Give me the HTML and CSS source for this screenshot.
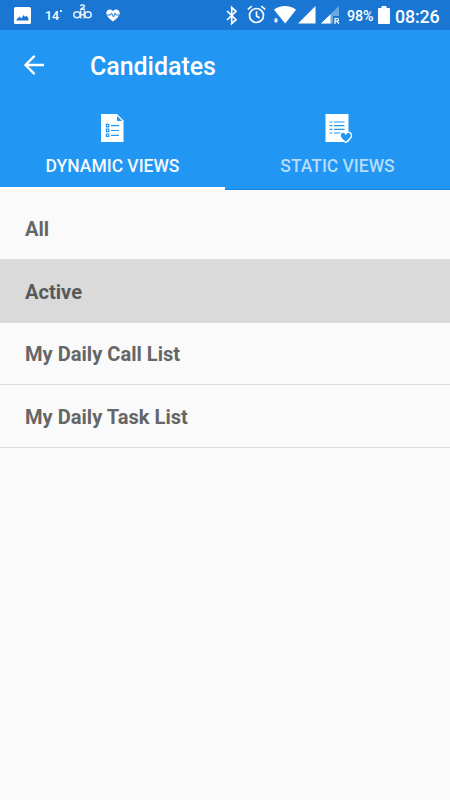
FILE: index.html
```html
<!DOCTYPE html>
<html lang="en">
<head>
<meta charset="utf-8">
<title>Candidates</title>
<link rel="stylesheet" href="styles.css">
</head>
<body>
<div class="status">
  <div class="status-left">
    <svg class="picture" width="17" height="17" viewBox="0 0 17 17"><path fill="#fff" fill-rule="evenodd" d="M1.500 0h14Q17 0 17 1.500v14Q17 17 15.500 17h-14Q0 17 0 15.500v-14Q0 0 1.500 0zM2.500 13.500h12v-2l-2-3-1.500 1.500-1.500-2-2 3.500-2-2-3 3z"/></svg>
    <span class="temp">14<i class="degree"></i></span>
    <svg class="dab" width="20" height="17" viewBox="0 0 20 17" fill="none" stroke="#e3effb" stroke-width="1.500"><ellipse cx="4" cy="10.800" rx="3.200" ry="3"/><ellipse cx="15" cy="10.800" rx="3.200" ry="3"/><path d="M7.700 6.500v8M11.300 6.500v8M7.700 10.800h3.600M7.300 2c.8-1.500 4.300-1.500 4.300.3 0 1.200-3 1.300-3.800 3h4.400"/></svg>
    <svg class="heart" width="14" height="13" viewBox="0 0 14 13"><path fill="#fff" d="M7 12.500C3.500 9.600.3 7.300.3 4 .3.400 4.800-.8 7 2.100 9.200-.8 13.700.4 13.700 4c0 3.300-3.200 5.600-6.700 8.500z"/><path fill="none" stroke="#1976d2" stroke-width="1" d="M1 6h3.300l1.200-2 2 4 1.700-4 1 2H13"/></svg>
  </div>
  <div class="status-right">
    <svg class="bt" width="12" height="19" viewBox="0 0 12 19" fill="none" stroke="#fff" stroke-width="1.700"><path d="M1 5l9 8.700-4.300 3.800v-16L10 5.300 1 14"/></svg>
    <svg class="alarm" width="19" height="19" viewBox="0 0 19 19" fill="none" stroke="#fff"><circle cx="9.500" cy="10.500" r="7" stroke-width="1.700"/><path stroke-width="1.600" d="M9.500 6.300v4.700l3.200 2M.8 4.400l4-3.300M18.200 4.400l-4-3.300"/></svg>
    <svg class="wifi" width="22" height="18" viewBox="0 0 22 18"><path fill="#fff" d="M0 3.700C6-1.200 16-1.200 22 3.700L11.200 17.500z"/><path fill="#d5e7fa" d="M2 11.500l1.600 1.800v2L2 17.300.4 15.300v-2z"/></svg>
    <svg class="signal" width="18" height="18" viewBox="0 0 18 18"><path fill="#fff" d="M17.500 0v17.500H0z"/></svg>
    <svg class="signal-two" width="19" height="18" viewBox="0 0 19 18"><path fill="#6aa8e4" d="M18 0v10h-6v7.500H0z"/><path fill="#fff" d="M9.500 8.300v9.200H0z"/><path fill="none" stroke="#fff" stroke-width="1.200" d="M14 18v-5.500h2.200q1.300 0 1.300 1.300t-1.300 1.400H14M16 15.200l1.900 2.800"/></svg>
    <span class="percent">98%</span>
    <svg class="battery" width="12" height="18" viewBox="0 0 12 18"><path fill="#fff" d="M3.500 0h5v2H11q1 0 1 1v14q0 1-1 1H1q-1 0-1-1V3q0-1 1-1h2.500z"/></svg>
    <span class="clock">08:26</span>
  </div>
</div>
<header class="appbar">
  <svg class="back" width="20" height="20" viewBox="0 0 20 20" fill="none" stroke="#fff" stroke-width="2.300"><path d="M20 10H1.800M10.600.9L1.500 10l9.100 9.100"/></svg>
  <h1 class="title">Candidates</h1>
</header>
<nav class="tabs">
  <div class="tab active">
    <svg class="tab-icon" width="28" height="30" viewBox="0 0 28 30"><path fill="#fff" d="M3 0h16l6.500 6.500V28H3z"/><path fill="#2196f3" d="M19 1.800l5.200 5.200H19z"/><path fill="none" stroke="#2196f3" stroke-width="1.200" d="M8.400 10.400h2.400v2.400H8.400zM8.400 15.200h2.400v2.400H8.400zM8.400 20h2.400v2.400H8.400zM13 11.600h8M13 16.500h8M13 21.300h8"/></svg>
    <span>DYNAMIC VIEWS</span>
  </div>
  <div class="tab">
    <svg class="tab-icon" width="28" height="30" viewBox="0 0 28 30"><path fill="#fff" d="M2.500 0h23v28h-23z"/><path fill="none" stroke="#2196f3" stroke-width="1.200" d="M6.500 8h3M11 8h10.500M6.500 11.700h3M11 11.700h10.500M6.500 15.400h3M11 15.400h10.500M6.500 19h3M11 19h7"/><path fill="#2196f3" stroke="#fff" stroke-width="1.300" d="M22.800 28.400c-3-2.200-5.700-4.200-5.700-7 0-3.500 4-4.300 5.700-1.500 1.700-2.800 5.700-2 5.700 1.500 0 2.800-2.700 4.800-5.700 7z"/></svg>
    <span>STATIC VIEWS</span>
  </div>
</nav>
<main class="list">
  <div class="row">All</div>
  <div class="row selected">Active</div>
  <div class="row">My Daily Call List</div>
  <div class="row">My Daily Task List</div>
</main>
</body>
</html>
```

FILE: styles.css
```css
* { box-sizing: border-box; }
body {
  margin: 0;
  min-height: 800px;
  background: #fafafa;
  font-family: Roboto, "Liberation Sans", sans-serif;
  color: #fff;
}
svg { display: block; flex: none; overflow: visible; }

.status {
  display: flex;
  justify-content: space-between;
  height: 30px;
  padding: 0 9px 0 14px;
  background: #1976d2;
}
.status-left, .status-right { display: flex; align-items: flex-start; }
.picture { margin-top: 7px; }
.temp {
  display: flex;
  width: 17px;
  margin: 8px 0 0 14px;
  font-size: 12.5px;
  line-height: 15px;
  font-weight: 500;
}
.degree { flex: none; width: 2px; height: 2px; margin: 2px 0 0 1px; background: #d9e9fa; }
.dab { margin: 4px 0 0 11px; }
.heart { margin: 9px 0 0 13px; }
.bt { margin-top: 6px; }
.alarm { margin: 5px 0 0 9px; }
.wifi { margin: 6px 0 0 8px; }
.signal { margin: 6px 0 0 2px; }
.signal-two { margin: 6px 0 0 5px; }
.percent {
  width: 27px;
  margin: 7px 0 0 7px;
  font-size: 14.3px;
  line-height: 18px;
  font-weight: 500;
  letter-spacing: -0.1px;
  white-space: nowrap;
}
.battery { margin: 6px 0 0 4px; }
.clock {
  width: 46px;
  margin: 6px 0 0 5px;
  font-size: 17.8px;
  line-height: 21px;
  font-weight: 500;
  letter-spacing: -0.1px;
  white-space: nowrap;
}

.appbar {
  display: flex;
  align-items: center;
  height: 71px;
  padding: 0 24px;
  background: #2196f3;
}
.back { margin-bottom: 2px; }
.title { margin: 3px 0 0 46px; font-size: 25px; line-height: 30px; font-weight: 500; letter-spacing: -0.05px; }

.tabs { display: flex; height: 89px; background: #2196f3; }
.tab {
  display: flex;
  flex: 1;
  flex-direction: column;
  align-items: center;
  padding-top: 13px;
  border-bottom: 1px solid #1685dd;
  font-size: 17.5px;
  line-height: 22px;
  font-weight: 500;
  letter-spacing: -0.02px;
  color: #b5dcfb;
}
.tab.active { border-bottom: 3px solid #fff; color: #f3f9ff; }
.tab-icon { margin: 0 1px 11px 0; }

.list { padding-top: 7.5px; }
.row {
  display: flex;
  align-items: center;
  height: 62.5px;
  padding: 2.4px 25px 0;
  border-bottom: 1px solid #dcdcdc;
  font-size: 20.1px;
  font-weight: 700;
  color: #666;
}
.row.selected { background: #dadada; color: #595959; }
```
